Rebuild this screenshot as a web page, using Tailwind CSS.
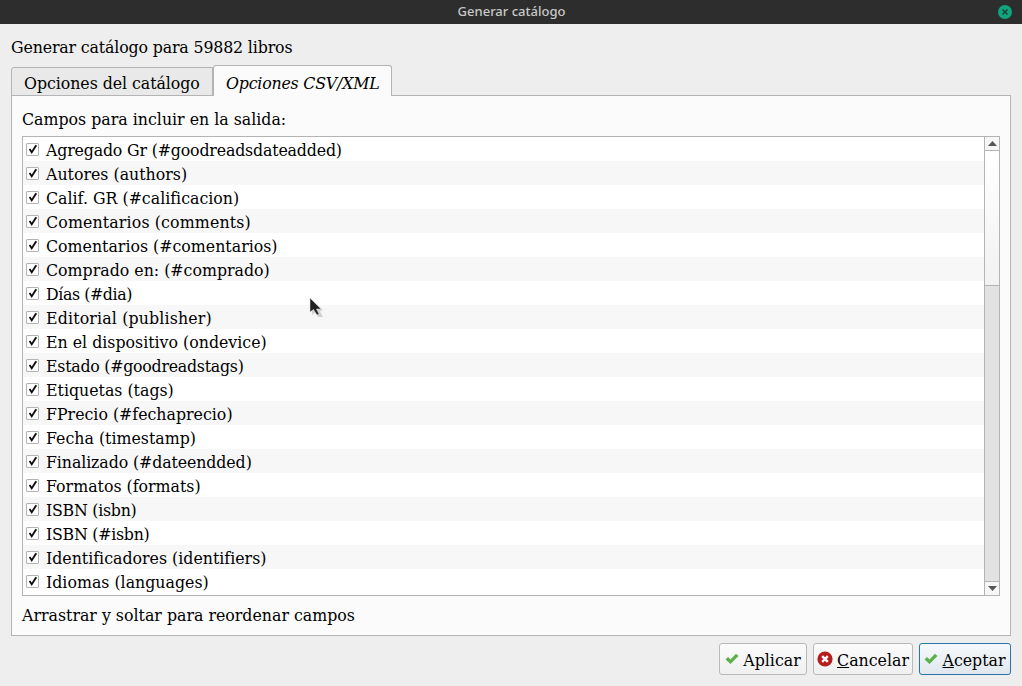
<!DOCTYPE html>
<html lang="es">
  <head>
    <meta charset="UTF-8" />
    <title>Generar catálogo</title>
    <script src="https://cdn.jsdelivr.net/npm/@tailwindcss/browser@4"></script>
  </head>
  <body class="relative bg-[#eeeeee] w-[1022px] h-[686px] overflow-hidden font-['DejaVu_Serif',serif] text-[15.8px] text-black flex flex-col">
    <!-- Title bar -->
    <div class="h-6 bg-[#2d2d2d] relative flex items-center justify-center shrink-0">
      <span class="font-['Noto_Sans',sans-serif] text-[13px] text-[#c8c8c8] font-medium pl-px">Generar catálogo</span>
      <div class="absolute right-[10px] top-[5px] w-[14px] h-[14px] rounded-full bg-[#0ea47f] flex items-center justify-center">
        <svg width="8" height="8" viewBox="0 0 8 8" fill="none" stroke="#24423a" stroke-width="1.6"><path d="M1.5 1.5l5 5M6.5 1.5l-5 5" /></svg>
      </div>
    </div>

    <div class="flex flex-col flex-1 px-[11px]">
      <div class="h-[41px] flex items-end pb-[7px] leading-5 tracking-[-0.15px]">Generar catálogo para 59882 libros</div>

      <!-- Tabs -->
      <div class="flex items-end h-[31px] -mb-px relative z-10">
        <div class="w-[202px] h-[29px] bg-[#e9e9e9] border border-[#b4b4b4] rounded-tl-[3px] flex items-center pl-3 pt-[5px] tracking-[-0.05px]">Opciones del catálogo</div>
        <div class="w-[179px] h-[31px] bg-[#fbfbfb] border border-[#b4b4b4] border-b-0 rounded-t-[3px] flex items-center pl-3 pt-[5px] italic tracking-[-0.2px]">Opciones CSV/XML</div>
      </div>

      <!-- Panel -->
      <div class="h-[541px] bg-[#fbfbfb] border border-[#b4b4b4] px-[10px] flex flex-col shrink-0">
        <div class="h-10 flex items-center pt-2">Campos para incluir en la salida:</div>
        <div class="h-[460px] bg-white border border-[#b4b4b4] flex">
          <ul id="fields" class="flex-1 overflow-hidden"></ul>
          <!-- Scrollbar -->
          <div class="w-[15px] border-l border-[#b4b4b4] bg-[#e2e2e2] flex flex-col">
            <div class="h-[14px] bg-[#f6f6f6] border-b border-[#b4b4b4] flex items-center justify-center">
              <svg width="9" height="5" viewBox="0 0 9 5" fill="#555555"><path d="M4.5 0L9 5H0z" /></svg>
            </div>
            <div class="h-[135px] bg-gradient-to-b from-white to-[#f2f2f2] border-b border-[#b4b4b4]"></div>
            <div class="flex-1"></div>
            <div class="h-[14px] bg-[#f6f6f6] border-t border-[#b4b4b4] flex items-center justify-center">
              <svg width="9" height="5" viewBox="0 0 9 5" fill="#555555"><path d="M0 0H9L4.5 5z" /></svg>
            </div>
          </div>
        </div>
        <div class="flex-1 flex items-center pt-px">Arrastrar y soltar para reordenar campos</div>
      </div>

      <!-- Buttons -->
      <div class="flex justify-end gap-[6px] mt-[7px]">
        <button class="w-[88px] h-8 rounded-[3px] border border-[#b9b9b9] bg-gradient-to-b from-[#fbfbfb] to-[#f0f0f0] flex items-center justify-center gap-[4px]">
          <svg width="14" height="12" viewBox="0 0 14 12"><path d="M0.5 6.5L3 4l2.5 2.5L11 0.8l2.5 2.3L5.5 11z" fill="#5cb04a" /></svg>
          <span class="pt-1">Aplicar</span>
        </button>
        <button class="w-[100px] h-8 rounded-[3px] border border-[#b9b9b9] bg-gradient-to-b from-[#fbfbfb] to-[#f0f0f0] flex items-center justify-center gap-[4px]">
          <svg width="16" height="16" viewBox="0 0 16 16"><circle cx="8" cy="8" r="7.6" fill="#b81d1d" /><path d="M5.2 5.2l5.6 5.6M10.8 5.2l-5.6 5.6" stroke="#ffffff" stroke-width="2.4" /></svg>
          <span class="pt-1"><u>C</u>ancelar</span>
        </button>
        <button class="w-[92px] h-8 rounded-[3px] border border-[#2a74a8] bg-gradient-to-b from-[#f6f9fb] to-[#dfe8ee] flex items-center justify-center gap-[4px]">
          <svg width="14" height="12" viewBox="0 0 14 12"><path d="M0.5 6.5L3 4l2.5 2.5L11 0.8l2.5 2.3L5.5 11z" fill="#5cb04a" /></svg>
          <span class="pt-1"><u>A</u>ceptar</span>
        </button>
      </div>
    </div>

    <!-- Mouse pointer -->
    <svg class="absolute left-[308px] top-[296px]" width="18" height="24" viewBox="0 0 18 24">
      <path d="M3 3L3 18L6.5 15L9 20L14 20L11 14.5L14 13z" fill="#000000" opacity="0.15" transform="translate(1 1)" />
      <path d="M2 2L2 16L5.5 13.5L9 19L11 18L8.5 13L13 13z" fill="#222222" stroke="#dddddd" stroke-width="0.5" />
    </svg>

    <script>
      const fields = [
        ["Agregado Gr (#goodreadsdateadded)", "tracking-[-0.17px]"],
        ["Autores (authors)", ""],
        ["Calif. GR (#calificacion)", ""],
        ["Comentarios (comments)", "tracking-[0.14px]"],
        ["Comentarios (#comentarios)", ""],
        ["Comprado en: (#comprado)", ""],
        ["Días (#dia)", "tracking-[-0.4px]"],
        ["Editorial (publisher)", "tracking-[0.15px]"],
        ["En el dispositivo (ondevice)", ""],
        ["Estado (#goodreadstags)", "tracking-[-0.25px]"],
        ["Etiquetas (tags)", ""],
        ["FPrecio (#fechaprecio)", ""],
        ["Fecha (timestamp)", ""],
        ["Finalizado (#dateendded)", "tracking-[-0.1px]"],
        ["Formatos (formats)", ""],
        ["ISBN (isbn)", "tracking-[-0.25px]"],
        ["ISBN (#isbn)", "tracking-[-0.25px]"],
        ["Identificadores (identifiers)", ""],
        ["Idiomas (languages)", ""],
      ];
      document.getElementById("fields").innerHTML = fields
        .map(
          ([name, extra]) => `<li class="h-6 flex items-center pl-[3px] gap-[7px] even:bg-[#f7f7f7]">
            <span class="w-[13px] h-[13px] border border-[#b4b4b4] bg-white rounded-[1px] flex items-center justify-center">
              <svg width="10" height="10" viewBox="0 0 10 10" fill="none" stroke="#111" stroke-width="1.9"><path d="M1.6 5l2.1 3.2 4.6-7" /></svg>
            </span>
            <span class="pt-1 ${extra}">${name}</span>
          </li>`
        )
        .join("");
    </script>
  </body>
</html>
